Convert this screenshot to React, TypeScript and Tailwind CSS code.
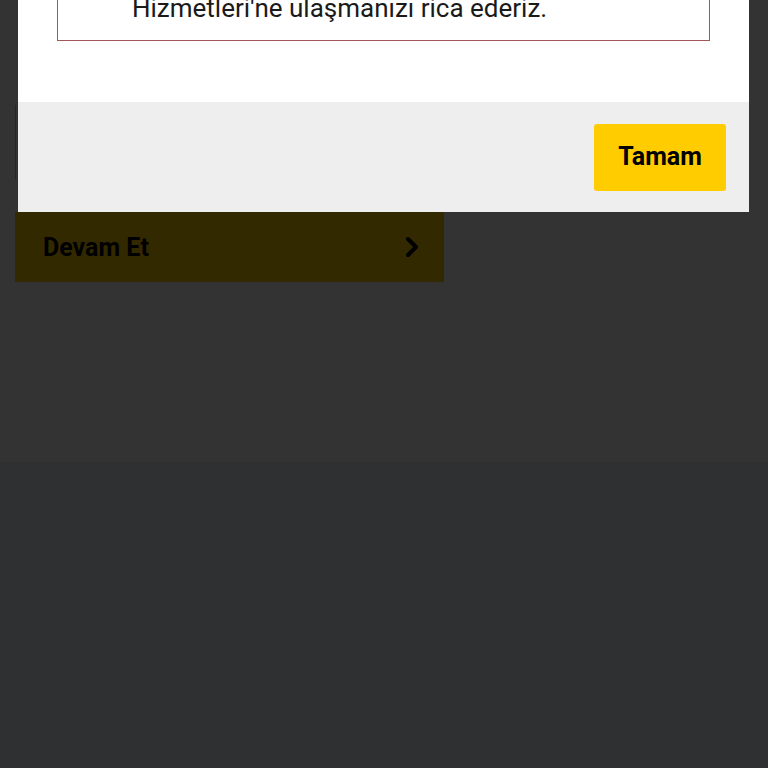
import { useState } from 'react';

const ChevronRight = () => (
	<svg
		xmlns="http://www.w3.org/2000/svg"
		viewBox="0 0 16 24"
		fill="none"
		stroke="#000"
		strokeWidth="4"
		strokeLinecap="round"
		strokeLinejoin="round"
		className="h-[24px] w-[16px]"
	>
		<path d="M4 4l8 8-8 8" />
	</svg>
);

const App: React.FC = () => {
	const [open, setOpen] = useState(true);

	return (
		<div
			className="relative flex min-h-screen flex-col overflow-hidden"
			style={{ fontFamily: 'Roboto, "Liberation Sans", sans-serif' }}
		>
			{/* page behind the overlay */}
			<div className="flex h-[462px] flex-col bg-[#333333] px-[15px]">
				<div className="mt-[105px] h-[74px] w-[1px] bg-[#262626]" />
				<button className="mt-[33px] flex h-[70px] w-[429px] items-center justify-between bg-[#332900] pl-[28px] pr-[24px]">
					<span className="text-[25px] font-bold leading-none text-black">Devam Et</span>
					<ChevronRight />
				</button>
			</div>
			<div className="flex-1 bg-[#2f3032]" />

			{open && (
				<div className="absolute left-[18px] top-[-60px] w-[731px] bg-white">
					<div className="px-[39px] pb-[61px]">
						<div className="h-[101px] border-[1.5px] border-[#a3575d] pl-[74px] pt-[52px]">
							<p className="text-[26px] leading-[30px] text-[#1a1a1a]">
								Hizmetleri'ne ulaşmanızı rica ederiz.
							</p>
						</div>
					</div>
					<div className="flex h-[110px] items-center justify-end bg-[#eeeeee] pr-[23px]">
						<button
							onClick={() => setOpen(false)}
							className="h-[67px] w-[132px] rounded-[3px] bg-[#ffcc00] text-[25px] font-bold text-black"
						>
							Tamam
						</button>
					</div>
				</div>
			)}
		</div>
	);
};

export default App;
